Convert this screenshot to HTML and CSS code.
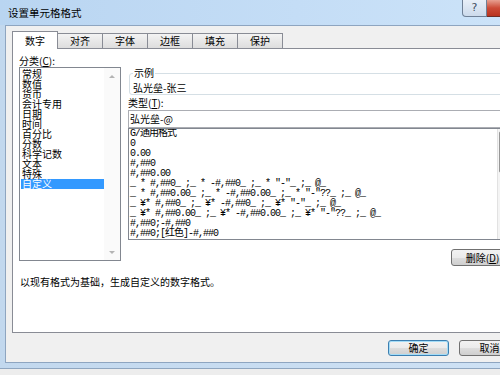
FILE: index.html
```html
<!DOCTYPE html>
<html lang="zh-CN">
<head>
    <meta charset="UTF-8">
    <meta name="viewport" content="width=device-width, initial-scale=1.0">
    <title>设置单元格格式</title>
    <link rel="stylesheet" href="styles.css">
</head>
<body>

    <div class="window">
        <!-- Title bar -->
        <div class="titlebar">
            <span class="title">设置单元格格式</span>
            <div class="caption-buttons">
                <span class="cap-btn help">?</span>
                <span class="cap-btn close"></span>
            </div>
        </div>

        <div class="client">
            <!-- Tabs -->
            <div class="tabs">
                <span class="tab active">数字</span>
                <span class="tab">对齐</span>
                <span class="tab">字体</span>
                <span class="tab">边框</span>
                <span class="tab">填充</span>
                <span class="tab">保护</span>
            </div>

            <!-- Number tab page -->
            <div class="panel">
                <div class="top-row">
                    <div class="left-col">
                        <div class="label">分类(<u>C</u>):</div>
                        <div class="listbox">
                            <div class="items">
                                <div class="item">常规</div>
                                <div class="item">数值</div>
                                <div class="item">货币</div>
                                <div class="item">会计专用</div>
                                <div class="item">日期</div>
                                <div class="item">时间</div>
                                <div class="item">百分比</div>
                                <div class="item">分数</div>
                                <div class="item">科学记数</div>
                                <div class="item">文本</div>
                                <div class="item">特殊</div>
                                <div class="item selected">自定义</div>
                            </div>
                            <div class="vscroll">
                                <span class="arrow up"></span>
                                <span class="arrow down"></span>
                            </div>
                        </div>
                    </div>

                    <div class="right-col">
                        <fieldset class="sample">
                            <legend>示例</legend>
                            <div class="sample-text">弘光垒-张三</div>
                        </fieldset>
                        <div class="label type-label">类型(<u>T</u>):</div>
                        <div class="textbox">弘光垒-@</div>
                        <div class="formats">
                            <div class="format-items">
                                <div class="fmt">G/通用格式</div>
                                <div class="fmt">0</div>
                                <div class="fmt">0.00</div>
                                <div class="fmt">#,##0</div>
                                <div class="fmt">#,##0.00</div>
                                <div class="fmt">_ * #,##0_ ;_ * -#,##0_ ;_ * "-"_ ;_ @_</div>
                                <div class="fmt">_ * #,##0.00_ ;_ * -#,##0.00_ ;_ * "-"??_ ;_ @_</div>
                                <div class="fmt">_ ¥* #,##0_ ;_ ¥* -#,##0_ ;_ ¥* "-"_ ;_ @_</div>
                                <div class="fmt">_ ¥* #,##0.00_ ;_ ¥* -#,##0.00_ ;_ ¥* "-"??_ ;_ @_</div>
                                <div class="fmt">#,##0;-#,##0</div>
                                <div class="fmt">#,##0;[红色]-#,##0</div>
                            </div>
                            <div class="fscroll"><span class="thumb"></span></div>
                        </div>
                        <div class="btn-row">
                            <button class="btn delete">删除(<u>D</u>)</button>
                        </div>
                    </div>
                </div>

                <p class="desc">以现有格式为基础，生成自定义的数字格式。</p>
            </div>

            <!-- OK / Cancel -->
            <div class="dialog-buttons">
                <button class="btn default">确定</button>
                <button class="btn">取消</button>
            </div>
        </div>
    </div>

</body>
</html>
```

FILE: styles.css
```css
html, body {
    margin: 0;
    height: 100%;
    overflow: hidden;
}
body {
    background-color: #ededed;
    font-family: "Noto Sans CJK SC", "Liberation Sans", sans-serif;
    font-size: 10px;
    color: #000;
}
u {
    text-decoration: underline;
}
.window {
    width: 540px;
    height: 369px;
    box-sizing: border-box;
    display: flex;
    flex-direction: column;
    background: linear-gradient(to right, #c2d8ee, #cfe2f5);
    border-bottom: 1px solid #8fa6c0;
}
.titlebar {
    height: 25px;
    display: flex;
    justify-content: space-between;
    background: linear-gradient(to right, #b9d5f1, #c4ddf6 55%, #cde4f9);
}
.title {
    padding-left: 8px;
    line-height: 25px;
    font-size: 10.5px;
}
.caption-buttons {
    display: flex;
    align-self: flex-start;
    margin-right: 10px;
}
.cap-btn {
    height: 17px;
    box-sizing: border-box;
    border: 1px solid #6f8096;
    border-top: none;
}
.help {
    width: 25px;
    border-radius: 0 0 0 4px;
    background: linear-gradient(#e8eff8, #ccdaeb);
    color: #3f4f63;
    text-align: center;
    line-height: 16px;
    font-size: 11px;
    font-family: "DejaVu Sans", sans-serif;
}
.close {
    width: 43px;
    border-left: none;
    border-color: #6e2c24;
    border-radius: 0 0 4px 0;
    background: linear-gradient(#e7a091, #cc4b37 50%, #b9331f);
}
.client {
    flex: 1;
    margin: 0 10px 5px 5px;
    border: 1px solid #8ea5c0;
    background-color: #f0f0f0;
    padding: 5px 0 0 6px;
    display: flex;
    flex-direction: column;
}
.tabs {
    display: flex;
    align-items: flex-end;
    height: 17px;
}
.tab {
    box-sizing: border-box;
    width: 46px;
    height: 15px;
    margin-left: -1px;
    border: 1px solid #898c95;
    border-bottom: none;
    background: linear-gradient(#f3f3f3, #e8e8e8 50%, #dddddd);
    text-align: center;
    line-height: 14px;
}
.tab.active {
    height: 18px;
    margin-left: 0;
    margin-bottom: -1px;
    background: #fff;
    line-height: 17px;
    position: relative;
    z-index: 1;
}
.panel {
    box-sizing: border-box;
    width: 510px;
    height: 285px;
    border: 1px solid #898c95;
    background-color: #fff;
    padding: 6px 7px 0 6px;
}
.top-row {
    display: flex;
    gap: 7px;
}
.left-col {
    width: 102px;
}
.label {
    height: 12px;
    line-height: 12px;
}
.listbox {
    box-sizing: border-box;
    height: 194px;
    border: 1px solid #828790;
    display: flex;
}
.items {
    flex: 1;
    padding: 1px 0 0 1px;
}
.item {
    line-height: 10px;
    padding-left: 1px;
    white-space: nowrap;
}
.item.selected {
    background-color: #3399ff;
    color: #fff;
}
.vscroll {
    width: 16px;
    display: flex;
    flex-direction: column;
    justify-content: space-between;
    background-color: #fafafa;
}
.arrow {
    height: 16px;
    display: flex;
    align-items: center;
    justify-content: center;
}
.arrow::before {
    content: "";
    border-left: 3px solid transparent;
    border-right: 3px solid transparent;
}
.arrow.up::before {
    border-bottom: 3px solid #b4b4b4;
}
.arrow.down::before {
    border-top: 3px solid #b4b4b4;
}
.right-col {
    flex: 1;
    display: flex;
    flex-direction: column;
}
.sample {
    margin: 13px 0 0 1px;
    padding: 4px 3px 0 3px;
    border: 1px solid #d5dfe5;
    border-radius: 3px;
    min-width: 0;
}
.sample legend {
    padding: 0 1px;
    line-height: 10px;
}
.sample-text {
    line-height: 12px;
}
.type-label {
    margin-top: 2px;
}
.textbox {
    box-sizing: border-box;
    height: 18px;
    margin-top: 1px;
    border: 1px solid #abadb3;
    padding-left: 1px;
    line-height: 16px;
}
.formats {
    box-sizing: border-box;
    height: 112px;
    border: 1px solid #828790;
    display: flex;
}
.format-items {
    flex: 1;
    padding-left: 1px;
    overflow: hidden;
    font-family: "Liberation Mono", "Noto Sans CJK SC", monospace;
    letter-spacing: -1px;
}
.fmt {
    line-height: 10px;
    white-space: pre;
}
.fscroll {
    width: 16px;
    background-color: #f4f4f4;
    border-left: 1px solid #e2e2e2;
    padding: 2px 1px 0 1px;
    box-sizing: border-box;
}
.thumb {
    display: block;
    height: 40px;
    border: 1px solid #979797;
    border-radius: 2px;
    background: linear-gradient(to right, #f2f2f2, #dcdcdc);
}
.btn-row {
    display: flex;
    justify-content: flex-end;
    margin-top: 9px;
}
.btn {
    box-sizing: border-box;
    height: 17px;
    padding: 0;
    border: 1px solid #707070;
    border-radius: 3px;
    background: linear-gradient(#f2f2f2, #ebebeb 50%, #dddddd 51%, #cfcfcf);
    font: inherit;
    line-height: 14px;
    color: #000;
}
.delete {
    width: 63px;
}
.desc {
    margin: 10px 0 0 1px;
    line-height: 12px;
}
.dialog-buttons {
    width: 510px;
    box-sizing: border-box;
    display: flex;
    justify-content: flex-end;
    gap: 10px;
    padding-right: 2px;
    margin-top: 7px;
}
.dialog-buttons .btn {
    width: 61px;
    height: 16px;
}
.btn.default {
    border-color: #3c7fb1;
    box-shadow: inset 0 0 0 1px #a3dcf7;
}
```
